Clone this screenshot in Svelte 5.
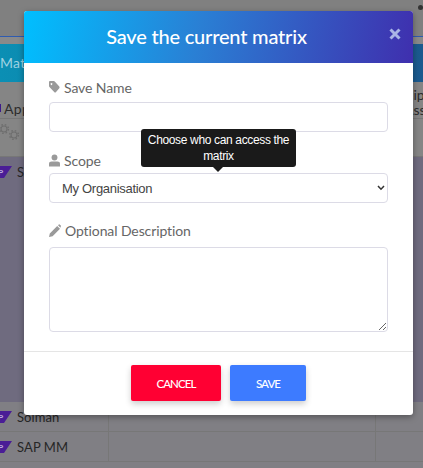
<script>
  const rows = ['Solman', 'SAP MM'];
</script>

<div class="page">
  <div class="topbar"><span class="dot"></span></div>
  <div class="gap"></div>
  <div class="tealbar"><span class="matr">Matrix</span></div>
  <div class="apps">
    <div class="approw">
      <span class="swatch"></span><span class="appname">Apps</span>
      <div class="rightcol">
        <span class="r1">Recip</span>
        <span class="r2">Assess</span>
      </div>
    </div>
    <div class="gearrow">
      <svg class="gears" width="24" height="26" viewBox="0 0 24 26" fill="none" stroke="#6e6e6e" stroke-width="1.1">
        <circle cx="4" cy="8" r="3" />
        <circle cx="4" cy="8" r="4.4" stroke-dasharray="1.6 1.9" stroke-width="1.4" />
        <circle cx="14" cy="14" r="3" />
        <circle cx="14" cy="14" r="4.4" stroke-dasharray="1.6 1.9" stroke-width="1.4" />
      </svg>
    </div>
  </div>
  <div class="purple">
    <div class="row first">
      <svg class="sap" width="16" height="12" viewBox="0 0 16 12"><polygon points="0,0 16,0 8,12 0,12" fill="#4a1d96" /><text x="2" y="9" font-size="8" fill="#b9a8dc" font-family="Liberation Sans" font-weight="700">P</text></svg>
      <span class="name">SAP</span>
    </div>
  </div>
  <div class="table">
    {#each rows as r}
      <div class="row trow">
        <div class="c1">
          <svg class="sap" width="16" height="12" viewBox="0 0 16 12"><polygon points="0,0 16,0 8,12 0,12" fill="#4a1d96" /><text x="2" y="9" font-size="8" fill="#b9a8dc" font-family="Liberation Sans" font-weight="700">P</text></svg>
          <span class="name">{r}</span>
        </div>
        <div class="c2"></div>
        <div class="c3"></div>
      </div>
    {/each}
  </div>

  <div class="modal">
    <header>
      <h2>Save the current matrix</h2>
      <svg class="close" width="12" height="12" viewBox="0 0 12 12"><path d="M1.5 1.5 L10.5 10.5 M10.5 1.5 L1.5 10.5" stroke="#a9b4e6" stroke-width="3" /></svg>
    </header>
    <div class="body">
      <div class="field">
        <label for="n">
          <svg width="11" height="12" viewBox="0 0 12.4 12" preserveAspectRatio="none"><path d="M0 1 Q0 0 1 0 H5.4 Q6 0 6.5 .5 L11.6 5.6 Q12.4 6.4 11.6 7.2 L7.7 11.2 Q6.9 12 6.1 11.2 L.5 6 Q0 5.6 0 5 Z M2.8 2 a1 1 0 1 0 .01 0 Z" fill="#9a9a9a" fill-rule="evenodd" /></svg>
          Save Name
        </label>
        <input id="n" type="text" />
      </div>
      <div class="field scope">
        <label for="s">
          <svg width="11" height="13" viewBox="0 0 12 13"><circle cx="6" cy="3.2" r="3.2" fill="#9a9a9a" /><path d="M0 13 V10.2 Q0 7.6 3 7.6 H9 Q12 7.6 12 10.2 V13 Z" fill="#9a9a9a" /></svg>
          Scope
        </label>
        <div class="selectwrap">
          <select id="s"><option>My Organisation</option></select>
          <svg class="chev" width="8" height="6" viewBox="0 0 8 6"><path d="M1 1 L4 4.2 L7 1" fill="none" stroke="#333" stroke-width="1.5" /></svg>
          <div class="tip">Choose who can access the matrix</div>
        </div>
      </div>
      <div class="field desc">
        <label for="d">
          <svg width="12" height="13" viewBox="0 0 12 13"><path d="M0 13 L.8 9.4 L8.2 2 L11 4.8 L3.6 12.2 Z M9 1.2 L9.8 .4 Q10.2 0 10.6 .4 L11.8 1.6 Q12.2 2 11.8 2.4 L11.4 3.8 Z" fill="#9a9a9a" /></svg>
          Optional Description
        </label>
        <textarea id="d"></textarea>
      </div>
    </div>
    <footer>
      <button class="cancel">CANCEL</button>
      <button class="save">SAVE</button>
    </footer>
  </div>
</div>

<style>
  :global(body) { margin: 0; }
  .page {
    position: relative;
    width: 423px;
    height: 468px;
    overflow: hidden;
    background: #808080;
    display: flex;
    flex-direction: column;
    font-family: "Lato", "Liberation Sans", sans-serif;
  }
  .topbar { height: 36px; border-bottom: 1px solid #2f5bb0; position: relative; }
  .dot { position: absolute; right: 0; top: 5px; width: 5px; height: 5px; border-radius: 50%; background: #333; }
  .gap { height: 7px; background: #8a8a8a; }
  .tealbar {
    height: 38px;
    background: linear-gradient(90deg, #0b8fb4 0%, #1b5a8e 100%);
    display: flex; align-items: center;
    color: #9fd3e3; font-size: 14px;
    letter-spacing: .3px;
  }
  .matr { margin-top: -2px; }
  .apps { height: 75px; background: #858585; display: flex; flex-direction: column; color: #2c2c2c; font-size: 14px; }
  .approw { height: 37px; display: flex; align-items: center; gap: 3px; position: relative; border-bottom: 1px solid #777; padding-top: 16px; box-sizing: border-box; }
  .swatch { width: 1px; height: 8px; background: #3d1a8a; }
  .appname { letter-spacing: .3px; }
  .rightcol { position: absolute; left: 0; top: 5px; width: 100%; line-height: 15px; }
  .r1, .r2 { position: absolute; }
  .r1 { left: 391px; top: 0; }
  .r2 { left: 404px; top: 15px; }
  .gearrow { flex: 1; position: relative; border-bottom: 1px solid #777; }
  .gears { position: absolute; left: 0; top: 2px; }
  .purple { height: 245px; background: #6f6b7f; }
  .row { display: flex; align-items: center; }
  .first { height: 30px; gap: 5px; }
  .sap { margin-left: -4px; }
  .name { color: #262626; font-size: 13px; letter-spacing: .1px; }
  .table { flex: 1; background: #807f84; }
  .trow { height: 30px; border-bottom: 1px solid #777; box-sizing: border-box; }
  .c1 { width: 109px; height: 100%; border-right: 1px solid #777; display: flex; align-items: center; gap: 5px; box-sizing: border-box; }
  .c2 { width: 267px; height: 100%; border-right: 1px solid #777; box-sizing: border-box; }
  .modal {
    position: absolute;
    left: 24px; top: 11px;
    width: 389px; height: 404px;
    background: #fff;
    border-radius: 3px;
    box-shadow: 0 2px 6px rgba(0,0,0,.35);
    display: flex;
    flex-direction: column;
    overflow: hidden;
  }
  header {
    height: 52px;
    flex: none;
    background: linear-gradient(100deg, #00bfff 0%, #2a7fd4 45%, #3f2fae 100%);
    display: flex; align-items: center; justify-content: center;
    position: relative;
    padding-right: 24px;
    box-sizing: border-box;
  }
  h2 { margin: -2px 0 0; color: #fff; font-size: 20px; font-weight: 500; letter-spacing: -.2px; }
  .close { position: absolute; right: 12px; top: 17px; }
  .body { flex: 1; padding: 15px 25px 0; box-sizing: border-box; display: flex; flex-direction: column; }
  .field { display: flex; flex-direction: column; }
  .scope { margin-top: 19px; }
  .desc { margin-top: 18px; }
  label { display: flex; align-items: center; gap: 4px; height: 18px; margin-bottom: 6px; font-size: 14px; color: #666; letter-spacing: -.1px; }
  .scope label { margin-bottom: 4px; }
  .desc label { margin-bottom: 8px; }
  input, select, textarea {
    display: block; box-sizing: border-box; width: 339px; border: 1px solid #dcdbe6; border-radius: 4px; background: #fff; margin: 0;
    font-family: "Liberation Sans", sans-serif; outline: none;
  }
  input { height: 30px; }
  select { height: 30px; padding: 0 12px; font-size: 13px; letter-spacing: -.3px; color: #444; appearance: none; -webkit-appearance: none; }
  textarea { height: 85px; }
  .selectwrap { position: relative; }
  .chev { position: absolute; right: 3px; top: 12px; pointer-events: none; }
  .tip {
    position: absolute;
    left: 92px; bottom: 36px;
    width: 155px; box-sizing: border-box;
    padding: 3px 4px;
    background: #1a1a1a; color: #fff;
    font: 12px/16px "Liberation Sans", sans-serif;
    letter-spacing: -.35px;
    text-align: center;
    border-radius: 3px;
  }
  .tip::after {
    content: ""; position: absolute; left: 72px; bottom: -5px;
    border: 5px solid transparent; border-bottom: 0; border-top-color: #1a1a1a;
  }
  footer {
    height: 64px; flex: none;
    border-top: 1px solid #e5e5e5;
    display: flex; justify-content: center; gap: 9px; padding-top: 13px;
    box-sizing: border-box;
  }
  button {
    height: 36px; border: none; border-radius: 2px; color: #fff;
    font: 500 11.5px "Lato", sans-serif; letter-spacing: -.9px;
    box-shadow: 0 3px 6px rgba(0,0,0,.2);
  }
  .cancel { width: 90px; background: #ff0033; }
  .save { width: 76px; background: #3d7bff; }
</style>
